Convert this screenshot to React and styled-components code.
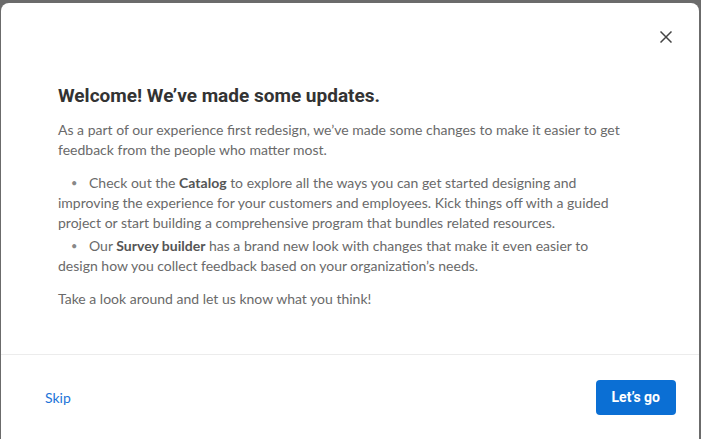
import styled, { createGlobalStyle } from "styled-components"

const Global = createGlobalStyle`
    html, body {
        margin: 0;
        padding: 0;
        background: #6b6b6b;
        overflow: hidden;
    }
`;

const Backdrop = styled.div`
    width: 701px;
    height: 439px;
    background: #6b6b6b;
    padding: 3px 2px 0 1px;
    box-sizing: border-box;
    display: flex;
`;

const Modal = styled.div`
    flex: 1;
    background: #fff;
    border-radius: 8px 8px 0 0;
    display: flex;
    flex-direction: column;
    font-family: Lato, "Open Sans", sans-serif;
`;

const Header = styled.div`
    display: flex;
    justify-content: flex-end;
    padding: 23px 22px 0 0;
    height: 42px;
    box-sizing: border-box;
`;

const CloseButton = styled.button`
    border: none;
    background: none;
    padding: 5px;
    display: flex;
    cursor: pointer;
    color: #444;
`;

const Body = styled.div`
    padding: 40px 68px 0 57px;
    height: 310px;
    box-sizing: border-box;
    border-bottom: 1px solid #ececec;
`;

const Title = styled.h2`
    margin: 0 0 13px 0;
    font-family: Roboto, sans-serif;
    font-size: 19px;
    line-height: 22px;
    font-weight: 700;
    color: #333;
`;

const Para = styled.p`
    margin: 0 0 13px 0;
    font-size: 14px;
    line-height: 20px;
    color: #6a6a6a;
`;

const List = styled.ul`
    list-style: none;
    margin: 0 0 13px 0;
    padding: 0;
`;

const Item = styled.li`
    font-size: 14px;
    line-height: 20px;
    color: #6a6a6a;
    margin-bottom: 3px;

    &::before {
        content: "•";
        display: inline-block;
        width: 31px;
        padding-left: 13px;
        box-sizing: border-box;
        font-size: 11px;
        line-height: 20px;
        vertical-align: top;
        color: #888;
    }

    b {
        color: #555;
    }
`;

const Footer = styled.div`
    display: flex;
    justify-content: space-between;
    align-items: center;
    padding: 0 23px 0 44px;
    flex: 1;
`;

const SkipLink = styled.a`
    color: #1c74d8;
    font-size: 14px;
    cursor: pointer;
`;

const GoButton = styled.button`
    background: #0b6fd4;
    color: #fff;
    border: none;
    border-radius: 4px;
    height: 35px;
    padding: 0 16px;
    font-family: Roboto, sans-serif;
    font-size: 14px;
    font-weight: 700;
`;

const App = () => {
    return (
        <>
            <Global />
            <Backdrop>
                <Modal>
                    <Header>
                        <CloseButton aria-label="Close">
                            <svg width="12" height="12" viewBox="0 0 12 12">
                                <path d="M0.5 0.5 L11.5 11.5 M11.5 0.5 L0.5 11.5" stroke="currentColor" strokeWidth="1.5" />
                            </svg>
                        </CloseButton>
                    </Header>
                    <Body>
                        <Title>Welcome! We’ve made some updates.</Title>
                        <Para>As a part of our experience first redesign, we’ve made some changes to make it easier to get feedback from the people who matter most.</Para>
                        <List>
                            <Item>Check out the <b>Catalog</b> to explore all the ways you can get started designing and improving the experience for your customers and employees. Kick things off with a guided project or start building a comprehensive program that bundles related resources.</Item>
                            <Item>Our <b>Survey builder</b> has a brand new look with changes that make it even easier to design how you collect feedback based on your organization’s needs.</Item>
                        </List>
                        <Para>Take a look around and let us know what you think!</Para>
                    </Body>
                    <Footer>
                        <SkipLink>Skip</SkipLink>
                        <GoButton>Let’s go</GoButton>
                    </Footer>
                </Modal>
            </Backdrop>
        </>
    )
}

export default App
